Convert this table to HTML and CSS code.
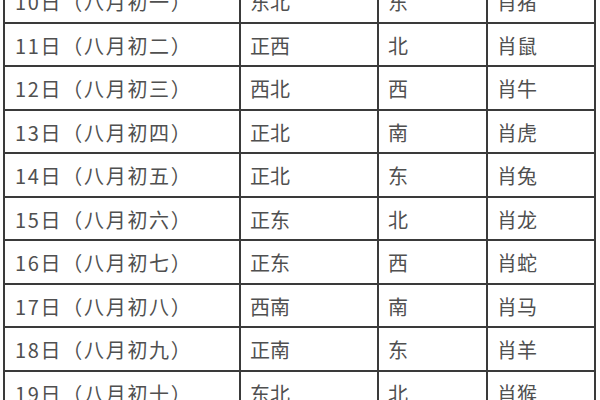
FILE: index.html
```html
<!DOCTYPE html>
<html lang="zh-CN">
<head>
<meta charset="utf-8">
<link rel="stylesheet" href="styles.css">
</head>
<body>
<table class="cal">
  <colgroup>
    <col class="c-date"><col class="c-dir"><col class="c-god"><col class="c-zod">
  </colgroup>
  <tbody>
    <tr><td>10日（八月初一）</td><td>东北</td><td>东</td><td>肖猪</td></tr>
    <tr><td>11日（八月初二）</td><td>正西</td><td>北</td><td>肖鼠</td></tr>
    <tr><td>12日（八月初三）</td><td>西北</td><td>西</td><td>肖牛</td></tr>
    <tr><td>13日（八月初四）</td><td>正北</td><td>南</td><td>肖虎</td></tr>
    <tr><td>14日（八月初五）</td><td>正北</td><td>东</td><td>肖兔</td></tr>
    <tr><td>15日（八月初六）</td><td>正东</td><td>北</td><td>肖龙</td></tr>
    <tr><td>16日（八月初七）</td><td>正东</td><td>西</td><td>肖蛇</td></tr>
    <tr><td>17日（八月初八）</td><td>西南</td><td>南</td><td>肖马</td></tr>
    <tr><td>18日（八月初九）</td><td>正南</td><td>东</td><td>肖羊</td></tr>
    <tr><td>19日（八月初十）</td><td>东北</td><td>北</td><td>肖猴</td></tr>
  </tbody>
</table>
</body>
</html>
```
FILE: styles.css
```css
html, body {
  margin: 0;
  padding: 0;
  background: #ffffff;
  overflow: hidden;
}
body {
  width: 600px;
  height: 400px;
  font-family: "Noto Sans CJK SC", "Microsoft YaHei", sans-serif;
}
.cal {
  border-collapse: collapse;
  margin: -22px 0 0 3px;
  width: 591px;
  table-layout: fixed;
  color: #505050;
  font-size: 20px;
}
.c-date { width: 236px; }
.c-dir { width: 138px; }
.c-god { width: 109px; }
.c-zod { width: 108px; }
.cal td {
  border: 2px solid #3a3a3a;
  height: 43.5px;
  padding: 3px 0 0 9px;
  box-sizing: border-box;
  line-height: 24px;
  white-space: nowrap;
  vertical-align: middle;
}
.cal td:first-child {
  padding-left: 10px;
  letter-spacing: 1.7px;
}
```
